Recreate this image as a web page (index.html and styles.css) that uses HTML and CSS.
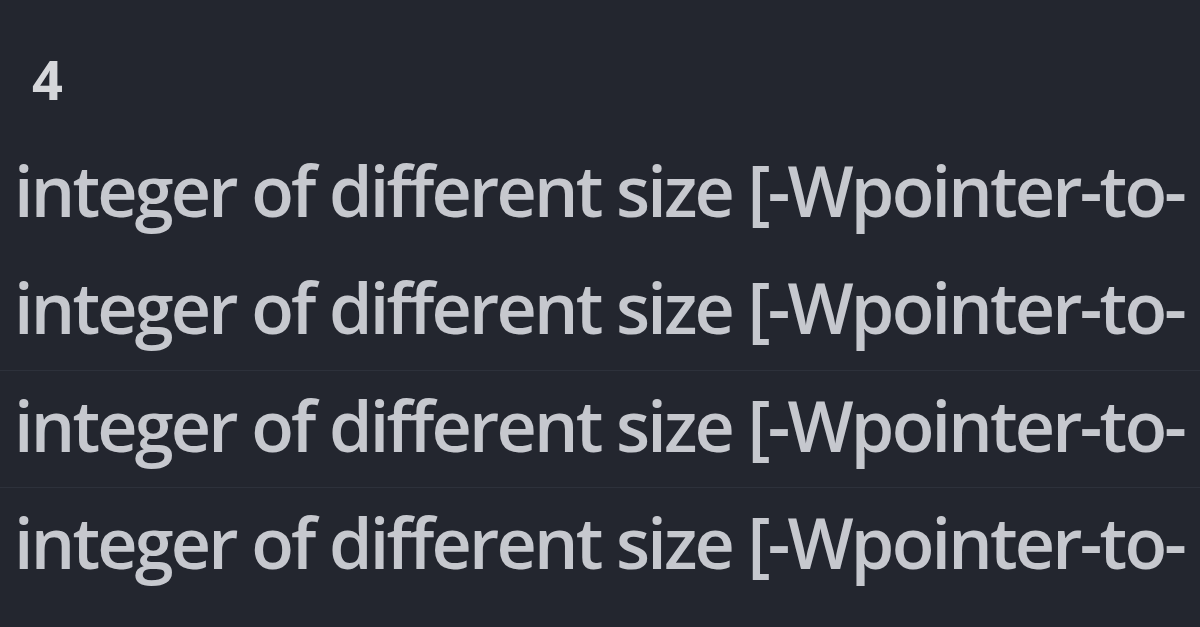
FILE: index.html
```html
<!DOCTYPE html>
<html>
<head>
<meta charset="utf-8">
<link rel="stylesheet" href="styles.css">
</head>
<body>
<div class="term">
  <div class="num">4</div>
  <div class="line">integer of different size [-Wpointer-to-</div>
  <div class="line">integer of different size [-Wpointer-to-</div>
  <div class="line sep">integer of different size [-Wpointer-to-</div>
  <div class="line sep">integer of different size [-Wpointer-to-</div>
</div>
</body>
</html>
```
FILE: styles.css
```css
html, body {
  margin: 0;
  padding: 0;
  background: #23262f;
  width: 1200px;
  height: 627px;
  overflow: hidden;
}
.term {
  display: flex;
  flex-direction: column;
  font-family: "Open Sans", "Noto Sans", sans-serif;
  color: #c6c8ce;
  white-space: nowrap;
}
.num {
  height: 136px;
  padding-left: 32px;
  font-size: 54px;
  font-weight: 700;
  line-height: 158px;
  color: #d6d7db;
}
.line {
  height: 117px;
  padding-left: 14px;
  font-size: 70px;
  font-weight: 600;
  line-height: 108px;
  letter-spacing: -2.8px;
  word-spacing: 0;
}
.sep {
  border-top: 1px solid #2d313b;
  height: 116px;
}
```
